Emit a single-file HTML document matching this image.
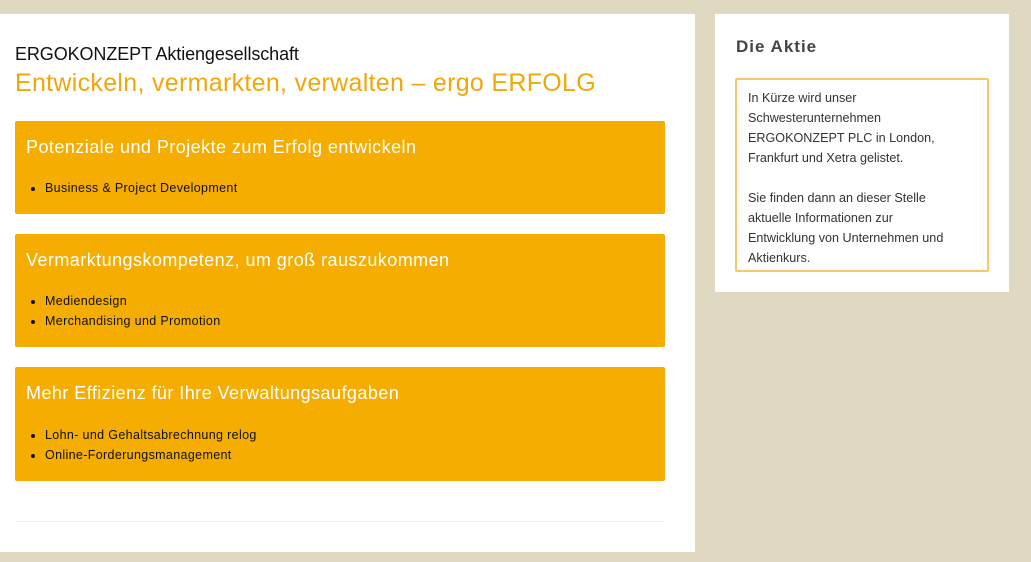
<!DOCTYPE html>
<html><head><meta charset="utf-8"><style>
*{margin:0;padding:0;box-sizing:border-box}
body{width:1031px;height:562px;background:#e0d9c2;position:relative;overflow:hidden;font-family:"Liberation Sans",sans-serif}
.main{position:absolute;left:0;top:14px;width:695px;height:538px;background:#fff}
.side{position:absolute;left:715px;top:14px;width:294px;height:278px;background:#fff}
.t1{position:absolute;left:15px;top:44px;font-size:18px;color:#111;letter-spacing:-0.1px}
.t2{position:absolute;left:15px;top:69px;font-size:25px;color:#f0a70b;letter-spacing:0.3px}
.blk{position:absolute;left:15px;width:650px;background:#f4ad00;border-radius:2px}
.blk h2{position:absolute;left:11px;top:16px;font-weight:normal;font-size:18px;color:#fff;letter-spacing:0.45px}
.blk ul{position:absolute;left:30px;list-style:disc;font-size:12.5px;color:#111;line-height:20px;letter-spacing:0.35px}
.sep{position:absolute;left:15px;top:521px;width:650px;height:1px;background:#eeeeee}
.da{position:absolute;left:736px;top:37px;font-size:17px;color:#444;font-weight:bold;letter-spacing:1px}
.box{position:absolute;left:735px;top:78px;width:254px;height:194px;border:2px solid #f6c86a;border-radius:2px;padding:8px 0 0 11px;font-size:12.6px;line-height:20px;color:#333}
</style></head><body>
<div class="main"></div>
<div class="side"></div>
<div class="t1">ERGOKONZEPT Aktiengesellschaft</div>
<div class="t2">Entwickeln, vermarkten, verwalten – ergo ERFOLG</div>
<div class="blk" style="top:121px;height:93px"><h2>Potenziale und Projekte zum Erfolg entwickeln</h2><ul style="top:57px"><li>Business &amp; Project Development</li></ul></div>
<div class="blk" style="top:234px;height:113px"><h2>Vermarktungskompetenz, um groß rauszukommen</h2><ul style="top:57px"><li>Mediendesign</li><li>Merchandising und Promotion</li></ul></div>
<div class="blk" style="top:367px;height:114px"><h2>Mehr Effizienz für Ihre Verwaltungsaufgaben</h2><ul style="top:58px"><li>Lohn- und Gehaltsabrechnung relog</li><li>Online-Forderungsmanagement</li></ul></div>
<div class="sep"></div>
<div class="da">Die Aktie</div>
<div class="box">In Kürze wird unser<br>Schwesterunternehmen<br>ERGOKONZEPT PLC in London,<br>Frankfurt und Xetra gelistet.<br><br>Sie finden dann an dieser Stelle<br>aktuelle Informationen zur<br>Entwicklung von Unternehmen und<br>Aktienkurs.</div>
</body></html>
